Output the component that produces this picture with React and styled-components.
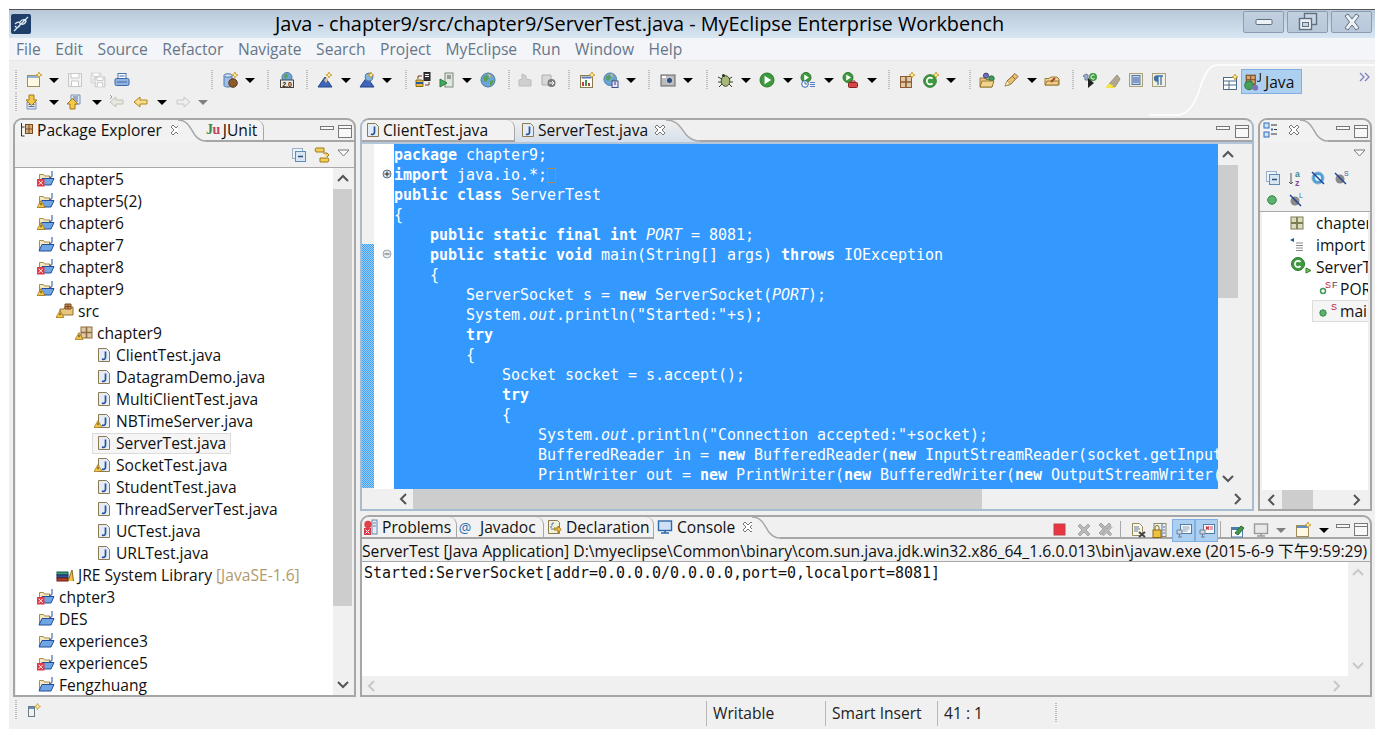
import React from 'react';
import styled, { createGlobalStyle } from 'styled-components';

const Global = createGlobalStyle`
  html, body { margin: 0; padding: 0; background: #fff; }
  body { font-family: "Open Sans", "Noto Sans", "Noto Sans CJK SC", sans-serif; font-size: 15.6px; color: #111; overflow: hidden; }
`;
const BORDER = '#a6a6a6';
const Window = styled.div`
  position: relative; width: 1366px; height: 720px; margin: 9px 0 0 9px; background: #f0f0f0;
  display: flex; flex-direction: column; overflow: hidden;
`;
const TitleBar = styled.div`
  height: 29px; flex: none; display: flex; align-items: center; padding-left: 2px; box-sizing: border-box;
  border-top: 1px solid #555; background: linear-gradient(#b8c8d8, #d8e6f3);
`;
const Logo = styled.svg` width: 20px; height: 20px; flex: none; `;
const Title = styled.div`
  flex: 1; padding: 0 0 2px 244px; font-size: 19.9px; color: #000; white-space: nowrap;
`;
const WinButtons = styled.div` display: flex; gap: 3px; padding: 0 3px 5px 0; align-self: flex-end; `;
const WinBtn = styled.div`
  width: 41px; height: 22px; box-sizing: border-box; border: 1px solid #8b9db3; border-radius: 2px;
  background: linear-gradient(#c2d0df, #b8c8da); display: flex; align-items: center; justify-content: center;
`;
const MenuBar = styled.div`
  height: 23px; flex: none; box-sizing: border-box; background: #f3f5f8; border-bottom: 1px solid #e6e6e6;
  display: flex; align-items: center; padding-left: 7px; gap: 14.6px; color: #66768a; font-size: 15.6px;
`;
const Toolbar = styled.div`
  position: relative; height: 57px; flex: none; display: flex; box-sizing: border-box; padding-top: 8px; background: #efefef;
`;
const Rows = styled.div` flex: 1; display: flex; flex-direction: column; `;
const Row = styled.div` height: 22px; display: flex; align-items: center; `;
const CurveLayer = styled.svg` position: absolute; left: 1140px; top: 0; pointer-events: none; `;
const Slot = styled.div`
  flex: none; width: ${p => p.$w}px; margin-left: ${p => p.$ml}px; display: flex; align-items: center; justify-content: center;
  height: ${p => p.$on ? 23 : 22}px; box-sizing: border-box;
  ${p => p.$on ? 'background:#aed0f0;border:1px solid #7fb0e4;' : ''}
`;
const Grip = styled.div`
  width: 2px; height: 20px; background: repeating-linear-gradient(#bdbdbd 0 1px, transparent 1px 2px);
`;
const Sep = styled.div` width: 1px; height: 18px; background: #a8a8a8; `;
const Drop = styled.div`
  width: 0; height: 0; border-left: 5px solid transparent; border-right: 5px solid transparent;
  border-top: 5px solid ${p => p.$gray ? '#808080' : '#000'};
`;
const Perspective = styled.div`
  position: absolute; left: 1213px; top: 8px; display: flex; align-items: center; gap: 3px;
`;
const JavaBtn = styled.div`
  width: 61px; height: 25px; box-sizing: border-box; background: #aed0f0; border: 1px solid #7fb0e4;
  display: flex; align-items: center; gap: 3px; padding-left: 2px; font-size: 15.6px;
`;
const More = styled.svg` position: absolute; left: 1350px; top: 11px; `;
const Workspace = styled.div` flex: 1; min-height: 0; display: flex; gap: 4px; padding: 0 3px 0 4px; `;
const RightCol = styled.div` flex: 1; display: flex; flex-direction: column; gap: 4px; min-width: 0; `;
const TopRow = styled.div` display: flex; gap: 4px; height: 393px; flex: none; `;
const Panel = styled.div`
  box-sizing: border-box; width: ${p => p.$w ? p.$w + 'px' : 'auto'}; ${p => p.$w ? 'flex:none;' : 'flex:1;'}
  min-height: 0; display: flex; flex-direction: column; overflow: hidden;
  border: 2px solid ${p => p.$active ? '#a8bccf' : BORDER}; border-top-color: ${BORDER};
  border-radius: 9px 9px 0 0; background: #f0f0f0;
`;
const Strip = styled.div` height: 22px; flex: none; display: flex; position: relative; `;
const Tab = styled.div`
  flex: none; position: relative; z-index: ${p => p.$active ? 2 : 1}; height: 100%; box-sizing: border-box;
  width: ${p => p.$w}px; margin-left: ${p => p.$ml || 0}px; padding-left: ${p => p.$pl ?? 4}px;
  display: flex; align-items: center; gap: ${p => p.$gap ?? 4}px; white-space: nowrap; font-size: 15.6px; color: #111;
  background: ${p => p.$grad ? 'linear-gradient(#f0f0f0, #d6e0eb)' : '#f2f2f2'};
  ${p => p.$active ? 'padding-bottom: 2px;' : `border-bottom: 2px solid ${BORDER}; border-right: 1px solid ${BORDER}; border-radius: 0 8px 0 0;`}
`;
const TabClose = styled.svg` flex: none; margin-left: ${p => p.$ml ?? 4}px; `;
const Curve = styled.svg` flex: none; position: relative; z-index: 2; display: block; `;
const StripFill = styled.div`
  flex: 1; min-width: 0; height: 100%; box-sizing: border-box; border-bottom: 2px solid ${BORDER};
  display: flex; align-items: flex-start; justify-content: flex-end; padding: ${p => p.$top ?? 1}px ${p => p.$right ?? 3}px 0 0;
`;
const ToolRow = styled.div`
  height: 25px; flex: none; display: flex; justify-content: flex-end; align-items: center; box-sizing: border-box;
  padding-right: ${p => p.$right ?? 0}px;
`;
const TreeWrap = styled.div` flex: 1; min-height: 0; display: flex; padding-left: 1px; border-top: 1px solid #a8a8a8; `;
const Tree = styled.div` flex: 1; min-width: 0; background: #fff; overflow: hidden; `;
const TreeRow = styled.div`
  height: 22px; display: flex; align-items: center; padding-left: ${p => p.$d * 19 + 19}px; white-space: nowrap;
`;
const RowBox = styled.div`
  display: flex; align-items: center; gap: 4px; height: 21px; padding: 0 4px 0 1px; box-sizing: border-box; flex: none;
  border: 1px solid ${p => p.$sel ? '#dcdcdc' : 'transparent'}; background: ${p => p.$sel ? '#f5f5f5' : 'transparent'};
`;
const IconSlot = styled.div` width: 18px; height: 18px; flex: none; display: flex; align-items: center; justify-content: center; `;
const Deco = styled.span` color: #b09a6c; `;
const VBar = styled.div` width: ${p => p.$w || 19}px; flex: none; display: flex; flex-direction: column; background: #f0f0f0; `;
const ArrowBox = styled.div`
  height: ${p => p.$h || 21}px; flex: none; display: flex; align-items: center; justify-content: center;
`;
const HArrow = styled.div` width: ${p => p.$w || 20}px; height: 100%; flex: none; display: flex; align-items: center; justify-content: center; `;
const Track = styled.div` flex: 1; min-height: 0; `;
const VThumb = styled.div` background: #cdcdcd; height: ${p => p.$h}px; margin-top: ${p => p.$t || 0}px; `;
const HBar = styled.div` height: ${p => p.$h || 20}px; flex: none; display: flex; background: #f0f0f0; padding-left: ${p => p.$l || 0}px; padding-right: ${p => p.$r || 0}px; `;
const HTrack = styled.div` flex: 1; min-width: 0; `;
const HThumb = styled.div` background: #cdcdcd; height: 100%; width: ${p => p.$w}px; margin-left: ${p => p.$l || 0}px; `;
const EditorBody = styled.div` flex: 1; min-height: 0; display: flex; border-top: 2px solid #b4c7da; `;
const Ruler = styled.div` width: 12px; flex: none; background: #f0f0f0; display: flex; flex-direction: column; `;
const RulerMark = styled.div`
  margin-top: 100px; height: 244px; background-color: #5fb0f5;
  background-image: repeating-conic-gradient(#9ccff8 0 25%, #3f9ff5 0 50%); background-size: 2px 2px;
`;
const Fold = styled.div` width: 20px; flex: none; background: #fff; position: relative; `;
const FoldMark = styled.svg` position: absolute; left: 8px; top: ${p => p.$y}px; `;
const Code = styled.pre`
  width: 824px; flex: none; margin: 0; overflow: hidden; background: #3399ff; color: #fff; padding-top: 1px; box-sizing: border-box;
  font: 15px/20px "DejaVu Sans Mono", monospace; letter-spacing: -.03px; white-space: pre;
  b { font-weight: 700; } i { font-style: italic; }
`;
const CaretBox = styled.span` display: inline-block; width: 9px; height: 15px; border: 1px solid #b08a50; vertical-align: -3px; box-sizing: border-box; `;
const Pad = styled.div` width: ${p => p.$w || 14}px; flex: none; background: #f0f0f0; `;
const OutlineTools = styled.div` height: 70px; flex: none; box-sizing: border-box; border-bottom: 1px solid #a8a8a8; `;
const OutlineTree = styled.div` flex: 1; min-height: 0; margin: 0 2px; background: #fff; overflow: hidden; `;
const ORow = styled.div`
  height: 22px; display: flex; align-items: center; white-space: nowrap; padding-left: ${p => p.$d ? 50 : 26}px;
`;
const OBox = styled.div`
  display: flex; align-items: center; gap: 1px; height: 22px; box-sizing: border-box; flex: none; width: 100%;
  border: 1px solid ${p => p.$sel ? '#dcdcdc' : 'transparent'}; border-right: 0; background: ${p => p.$sel ? '#f5f5f5' : 'transparent'};
`;
const OSlot = styled.div`
  width: 26px; height: 18px; flex: none; display: flex; align-items: center; justify-content: ${p => p.$start ? 'flex-start' : 'flex-end'};
`;
const ConsoleHead = styled.div`
  height: 23px; flex: none; box-sizing: border-box; border-bottom: 1px solid #a8a8a8; font-size: 15.7px;
  display: flex; align-items: center; white-space: nowrap; overflow: hidden; color: #111;
`;
const ConsoleMain = styled.div` flex: 1; min-height: 0; display: flex; `;
const ConsoleText = styled.pre`
  flex: 1; margin: 0; background: #fff; padding: 1px 0 0 2px; font: 15px/20px "DejaVu Sans Mono", monospace; letter-spacing: -.03px; color: #111;
`;
const StatusBar = styled.div` height: 32px; flex: none; display: flex; align-items: center; background: #f0f0f0; `;
const StatusLeft = styled.div` width: 697px; flex: none; display: flex; align-items: center; height: 100%; padding-bottom: 6px; box-sizing: border-box; `;
const StatusCell = styled.div`
  width: ${p => p.$w}px; flex: none; box-sizing: border-box; height: 25px; border-left: 1px solid #b8b8b8; padding-left: 6px;
  display: flex; align-items: center; font-size: 15.6px; color: #222; padding-bottom: 1px;
`;
const Ju = styled.span` font: 700 14px "Liberation Serif", serif; letter-spacing: -.5px; color: #3b8a4a; span { color: #c0455a; } `;
const At = styled.span` color: #2c6fb0; font-size: 14px; width: 14px; text-align: center; `;

const Sv = ({ s = 16, v = 16, children }) => <svg width={s} height={s} viewBox={`0 0 ${v} ${v}`} style={{ display: 'block', flex: 'none' }}>{children}</svg>;

const star = (x = 10, y = 0) => <path transform={`translate(${x} ${y})`} d="M3 0l.9 2.1L6 3l-2.1.9L3 6l-.9-2.1L0 3l2.1-.9z" fill="#fff3a8" stroke="#c08a10" strokeWidth=".7" />;
const warn = <><path d="M4 8.5l4 7H0z" fill="#f5c842" stroke="#9a6a10" strokeWidth=".7" /><path d="M4 10.8v2.5" stroke="#333" /></>;
const err = <><rect x="0" y="9" width="7.5" height="7.5" fill="#e0394a" /><path d="M1.7 10.8l4 4m0-4l-4 4" stroke="#fff" /></>;
const jfile = <><path d="M2.5 1.5h8l3 3v10h-11z" fill="#e4ecf7" stroke="#8d7b4f" /><path d="M9.5 4.5v5.8c0 2.2-2 2.4-3.5 1.6" stroke="#28529c" strokeWidth="1.7" fill="none" /></>;
const folderP = <><path d="M2.5 4.5h4l1 1.5h5.5v8h-10.5z" fill="#f7e9bd" stroke="#a58c4c" /><path d="M2 15l3-6.5h12l-3 6.5z" fill="#70a5e3" stroke="#1f4d9f" /><path d="M15 1v5c0 1.6-1.6 1.6-3 1" stroke="#1f4d9f" fill="none" /></>;
const pkg = <><rect x="3" y="3" width="11" height="11" fill="#dcc9a8" stroke="#8f6a3a" /><path d="M3 8.5h11M8.5 3v11" stroke="#8f6a3a" strokeWidth="1.6" /></>;
const floppy = (c = '#c8c8c8') => <><path d="M1.5 1.5h13v13h-13z" fill="#f2f2f2" stroke={c} /><path d="M4 2v4h8V2M4.5 14v-5h7v5" fill="#fff" stroke={c} /></>;
const arrowL = (c, f) => <path d="M1 8l6-5v3h7v4H7v3z" fill={f} stroke={c} />;
const arrowR = (c, f) => <path d="M15 8l-6-5v3H2v4h7v3z" fill={f} stroke={c} />;
const playGreen = (cx = 8, cy = 8, r = 7) => <><circle cx={cx} cy={cy} r={r} fill="#3f9a3f" stroke="#2a7a2a" /><path d={`M${cx - r * .35} ${cy - r * .6}L${cx + r * .6} ${cy}L${cx - r * .35} ${cy + r * .6}z`} fill="#fff" /></>;
const monitor = (c = '#4a7db0', f = '#fff') => <><rect x="1.5" y="2" width="13" height="9.5" fill={f} stroke={c} strokeWidth="1.4" /><path d="M4 14h8M8 11.5V14" stroke={c} strokeWidth="1.6" /></>;
const globe = <><circle cx="8" cy="8" r="7" fill="#6aa5d8" stroke="#4a78a0" /><path d="M3 5l4-2 2 3-3 4-2-1zM10 9l3-1 0 3-3 3z" fill="#5aa050" /><path d="M8 2l3 1-1 3z" fill="#f0c040" /></>;
const triStar = (g) => <><path d="M1 15L8 5l7 10z" fill="#3f66b8" stroke="#23458c" />{g ? <circle cx="10" cy="5" r="4" fill="#7db6e0" stroke="#5a7ea0" /> : <path d="M7 8l3-3 1 3-2 3z" fill="#d8c090" />}{star(9, 0)}</>;
const xshape = <path d="M2 4l2-2 4 4 4-4 2 2-4 4 4 4-2 2-4-4-4 4-2-2 4-4z" fill="#b9b9b9" stroke="#a5a5a5" />;

const ICONS = {
  new: <><rect x="1.5" y="3.5" width="12" height="11" fill="#fff9e4" stroke="#a08d58" /><rect x="2" y="4" width="11" height="2" fill="#8fb4e0" />{star(10, 0)}</>,
  fast: <><rect x="3.5" y="4.5" width="6" height="10" fill="#eef2f6" stroke="#6a7a80" /><rect x="4" y="5" width="5" height="2" fill="#5f8fc8" />{star(9.5, 1.5)}</>,
  save: floppy(), saveall: <><g transform="scale(.75)">{floppy()}</g><g transform="translate(4 4) scale(.75)">{floppy('#bbb')}</g></>,
  print: <><rect x="4" y="1.5" width="8" height="6" fill="#fff" stroke="#4a70a8" /><rect x="1" y="6.5" width="14" height="7" rx="1.5" fill="#8fb4e0" stroke="#3f66a8" /><path d="M5.5 4h5M3 10h10" stroke="#3f66a8" /></>,
  db: <><path d="M2 3.5v10c0 2 8 2 8 0v-10z" fill="#9cc0e8" stroke="#4f78b0" /><ellipse cx="6" cy="3.5" rx="4" ry="1.8" fill="#cfe0f4" stroke="#4f78b0" /><circle cx="11" cy="11" r="4.3" fill="#8a5a2c" stroke="#5c3a1a" />{star(10, 0)}</>,
  ws: <><circle cx="8" cy="5.5" r="5" fill="#6aa5d8" stroke="#4a78a0" /><path d="M5 3l3-1 1 3-3 2z" fill="#5aa050" /><rect x="1.5" y="8" width="13" height="7.5" fill="#eee" stroke="#444" /><text x="8" y="14.5" textAnchor="middle" fontSize="7" fontWeight="700" fontFamily="Liberation Sans" fill="#222">2.0</text></>,
  dep1: triStar(false), dep2: triStar(true),
  srv1: <><rect x="9" y=".5" width="6" height="8" fill="#333" stroke="#222" /><path d="M10 2.5h4M10 4.5h4" stroke="#fff" /><path d="M1 8h6l1 1.5v5H1z" fill="#e8b83a" stroke="#8a6a10" /><path d="M1 11h7" stroke="#2a5aa0" strokeWidth="2" /><path d="M7 4H3v3M10 13h4v-3" stroke="#7a3a10" fill="none" /></>,
  srv2: <><rect x="6" y="1" width="8" height="14" fill="#dfe8e0" stroke="#7a8a7a" /><path d="M8 4h4M8 6h4" stroke="#555" /><path d="M1 7l7 4-7 4z" fill="#3faa5a" stroke="#2a7a3a" /></>,
  globe,
  gray1: <><path d="M2 14V8l3-1V2l4 2v3l5 1v6z" fill="#cfcfcf" stroke="#bdbdbd" /></>,
  gray2: <><path d="M2 3h9v10H2z" fill="#d8d8d8" stroke="#b0b0b0" /><circle cx="11.5" cy="11" r="4" fill="#7a7a7a" /><path d="M9 11h5m-2-2l2 2-2 2" stroke="#fff" fill="none" /></>,
  report: <><rect x="1.5" y="3.5" width="12" height="12" fill="#fff" stroke="#8a7a50" /><rect x="2.5" y="4.5" width="10" height="2" fill="#5a7ab0" /><path d="M4 14V10M10 14v-3" strokeWidth="2" stroke="#c04040" /><path d="M7 14V8" strokeWidth="2" stroke="#3f9a4a" />{star(10, 0)}</>,
  globe2: <><g transform="scale(.9)">{globe}</g><rect x="9" y="9" width="6" height="6.5" fill="#e8e8f4" stroke="#444a8a" /><path d="M12 10v3" stroke="#3030a0" /></>,
  camera: <><rect x="1" y="3" width="14" height="11" fill="#bbb" stroke="#666" /><circle cx="9.5" cy="8.5" r="3.2" fill="#2f4f80" stroke="#ddd" /><rect x="2" y="4" width="4" height="2" fill="#fff" /></>,
  bug: <><ellipse cx="8.5" cy="9" rx="4.3" ry="5.3" fill="#a8b878" stroke="#40502a" /><circle cx="6.5" cy="3.5" r="1.6" fill="#2a3a20" /><path d="M1 5l4 2M1 10h3M2 15l3-3M15 5l-3 2M16 10h-3M15 15l-3-3" stroke="#304020" /></>,
  run: playGreen(),
  runh: <>{playGreen(6, 5.5, 5)}<circle cx="5" cy="12" r="3.3" fill="#fff" stroke="#3060b0" /><path d="M5 10v2h2" stroke="#3060b0" fill="none" /><path d="M10 10.5h5M10 12.5h5M10 14.5h5" stroke="#5a80c0" /></>,
  runt: <>{playGreen(6, 5.5, 5)}<rect x="6.5" y="10.5" width="9" height="5" rx="1" fill="#d04848" stroke="#902020" /><path d="M9 10.5V9h4v1.5" stroke="#902020" fill="none" /></>,
  npkg: <><rect x="1.5" y="4.5" width="11" height="11" fill="#e0c8a4" stroke="#8a5c30" /><path d="M1.5 10h11M7 4.5v11" stroke="#8a5c30" strokeWidth="1.6" />{star(10, 0)}</>,
  ncls: <><circle cx="7" cy="9" r="6.3" fill="#3f9a3f" stroke="#2a7a2a" /><path d="M9.5 6.7a3.3 3.3 0 1 0 0 4.6" stroke="#fff" strokeWidth="1.7" fill="none" />{star(10, 0)}</>,
  otype: <><path d="M1 6h5l1 1.5h6V15H1z" fill="#e8c680" stroke="#9a7a30" /><circle cx="7" cy="3.7" r="2.6" fill="#7070b0" stroke="#44447a" /><circle cx="12.5" cy="6.5" r="2.7" fill="#3f9a5a" stroke="#2a7a3a" /><path d="M1 15l2-6h12l-2 6z" fill="#f2d48e" stroke="#9a7a30" /></>,
  brush: <><path d="M2 14l2-5 8-7.5 3 3-7.5 8z" fill="#e8c070" stroke="#8a6a30" /><path d="M2 14l2-5 3 3z" fill="#fff8d0" stroke="#b0a070" /><path d="M9 4l3 3" stroke="#8a6a30" /></>,
  folderb: <><path d="M1 13V6.5h4L7 5h6l2 2v6z" fill="#f2d69a" stroke="#9a7a30" /><path d="M1 13l2-4h12l-1 4z" fill="#f0cc88" stroke="#9a7a30" /><path d="M7 10l4-4" stroke="#a04a2a" strokeWidth="2" /></>,
  gotog: <><path d="M1 4l3-2 2 1v5H3V5z" fill="#a0b4d0" stroke="#6a7a9a" /><circle cx="11" cy="5" r="4" fill="#3f9a3f" /><path d="M12.6 3.8a2 2 0 1 0 0 2.4" stroke="#fff" fill="none" /><path d="M6 6v10l6-5z" fill="#222" /></>,
  mark: <><path d="M2 15h8l5-8-3-4-7 8z" fill="#b0a890" stroke="#9a9078" /><path d="M1 15.5l3-4 4 2-1 2z" fill="#f8e840" /><path d="M1 15.5h9" stroke="#f8e040" strokeWidth="1.5" /></>,
  block: <><rect x="1.5" y="1.5" width="13" height="13" fill="#f0f0e0" stroke="#a8a078" /><rect x="4" y="3.5" width="8" height="9" fill="#c8d8f0" stroke="#5070a8" /><path d="M5 6h6M5 8h6M5 10h6" stroke="#3a5a9a" /></>,
  pil: <><rect x="1.5" y="1.5" width="13" height="13" fill="#f0f0e0" stroke="#a8a078" /><path d="M7 4H6a2.3 2.3 0 0 0 0 5h1V4zm0 0v9M10 4v9M6 4h6" stroke="#3f70a8" strokeWidth="1.3" fill="#3f70a8" /></>,
  down: <><path d="M2 8h9v7H2z" fill="#dfe8f4" stroke="#7a90b0" /><path d="M3.5 10.5h6M3.5 12.5h6" stroke="#5070a8" /><path d="M4 1h5v5h3l-5.5 5.5L1 6h3z" fill="#f4c848" stroke="#a07a18" /></>,
  up: <><path d="M5 1h9v9H5z" fill="#dfe8f4" stroke="#7a90b0" /><path d="M7 3h5M7 5h5M7 7h5" stroke="#5070a8" /><path d="M4 15h5v-5h3L6.5 4.5 1 10h3z" fill="#f4c848" stroke="#a07a18" /></>,
  backg: <>{arrowL('#c2c2b4', '#e8e8e0')}<path d="M1 1l2 2-2 2" stroke="#999" fill="none" /></>,
  back: arrowL('#b0861c', '#f7dc8c'),
  fwdg: arrowR('#c8c8c8', '#eeeeee'),
  stop: <rect x="2" y="2" width="11" height="11" fill="#e8353f" stroke="#c04048" />,
  xg: xshape,
  xxg: <><g transform="translate(-1 -1)">{xshape}</g><g transform="translate(2 2) scale(.85)">{xshape}</g></>,
  clip: <><path d="M2.5 1.5h7l3 3v9h-10z" fill="#f7f7ee" stroke="#9a8a5a" /><path d="M4 5h5M4 7h6M4 9h4" stroke="#6a7a9a" /><path d="M9 10l6 5m0-5l-6 5" stroke="#444" strokeWidth="2" /></>,
  lock: <><rect x="2" y="1.5" width="12" height="13" fill="#f0f0f0" stroke="#8a8a70" /><path d="M10 2v12M11 5h2M11 8h2M11 11h2" stroke="#5070a8" /><rect x="1" y="8" width="8" height="7.5" fill="#f0c040" stroke="#8a6a10" /><path d="M3 8V5.5a2 2 0 0 1 4 0V8" stroke="#8a6a10" fill="none" /></>,
  con1: <><rect x="4.5" y="1.5" width="11" height="9" fill="#f7fafd" stroke="#4f7ba8" /><path d="M6.5 4h7M6.5 6h7M6.5 8h5" stroke="#88a0b8" /><path d="M1 7h5v4H1zM2 14h4M3.5 11v3" stroke="#6a8098" fill="#cdd8e4" /></>,
  con2: <><rect x="4.5" y="1.5" width="11" height="9" fill="#f7fafd" stroke="#4f7ba8" /><path d="M7 3.5l3 3m0-3l-3 3" stroke="#d03040" strokeWidth="1.5" /><path d="M11 4h3M11 6h3" stroke="#c05060" /><path d="M1 7h5v4H1zM2 14h4M3.5 11v3" stroke="#6a8098" fill="#cdd8e4" /></>,
  pin: <><rect x="1.5" y="5.5" width="11" height="9.5" fill="#fff" stroke="#4f7ba8" /><rect x="2" y="6" width="10" height="2" fill="#4f7ba8" /><path d="M5 11l6-7 3 2-6 7z" fill="#3f9a4a" stroke="#2a6a30" /></>,
  mon: monitor('#9a9a9a', '#e8e8e8'),
  ncon: <><rect x="1.5" y="3.5" width="12" height="11" fill="#fff9e4" stroke="#a08d58" /><rect x="2" y="4" width="11" height="2" fill="#5f8fc8" />{star(10, 0)}</>,
  collapse: <><rect x="1.5" y="1.5" width="10" height="10" fill="#eef3f9" stroke="#9ab0c8" /><rect x="4.5" y="4.5" width="10" height="10" fill="#d8e6f4" stroke="#5f8ab4" /><path d="M7 9.5h5" stroke="#27507e" strokeWidth="1.6" /></>,
  link: <><path d="M2 1l-1 2 1 2h8V1zM14 11l1 2-1 2H6v-4z" fill="#f4cd5c" stroke="#a07a18" /><path d="M9 6h4l2 2-2 2" stroke="#a07a18" fill="#f4cd5c" /></>,
  vmenu: <path d="M2 3h11l-5.5 6z" fill="#fff" stroke="#777" />,
  min: <rect x="1.5" y="2.5" width="13" height="3" fill="#f8f8f8" stroke="#777" />,
  max: <><rect x="1.5" y="1.5" width="13" height="12" fill="#f8f8f8" stroke="#777" /><path d="M2 4.5h12" stroke="#777" /></>,
  outline: <><rect x="1" y="1" width="5" height="5" fill="#cfe0f4" stroke="#2f6fb8" /><rect x="1" y="10" width="5" height="5" fill="#cfe0f4" stroke="#2f6fb8" /><path d="M8 3h6M8 12h6" stroke="#333" /><rect x="8" y="6.5" width="2" height="2" fill="#2f6fb8" /><path d="M11 7.5h3" stroke="#333" /></>,
  az: <><path d="M3 3v11m-2-2l2 2 2-2" stroke="#555" fill="none" /><text x="7" y="7" fontSize="8.5" fontWeight="700" fontFamily="Liberation Sans" fill="#3a8a8a">a</text><text x="7" y="15.5" fontSize="9" fontWeight="700" fontFamily="Liberation Sans" fill="#8a4aa0">z</text></>,
  hidef: <><circle cx="8" cy="8" r="6" fill="#4aa0d8" stroke="#8ab0c8" /><circle cx="8" cy="8" r="3" fill="#e8f2fa" /><path d="M2 2l12 12" stroke="#1f3f90" strokeWidth="1.4" /></>,
  hides: <><circle cx="7" cy="9" r="4.5" fill="#8a8a8a" /><path d="M2 3l11 11" stroke="#1f3f90" strokeWidth="1.4" /><text x="11" y="6" fontSize="7" fontFamily="Liberation Sans" fill="#3a6a9a">S</text></>,
  hidel: <><circle cx="7" cy="9" r="4.5" fill="#8a8a8a" /><path d="M2 3l11 11" stroke="#1f3f90" strokeWidth="1.4" /><text x="11" y="6" fontSize="7" fontFamily="Liberation Sans" fill="#3a6a9a">L</text></>,
  dot: <circle cx="8" cy="8" r="4.3" fill="#5fb06a" stroke="#2f8a4a" />,
  pkgTab: <><path d="M2.5 1v13h3M2.500 5h3" stroke="#333" fill="none" /><rect x="6.500" y="2.500" width="7" height="9" fill="#d8b080" stroke="#7a4a20" /><path d="M6.500 7h7M10 2.500v9" stroke="#7a4a20" /></>,
  probs: <><rect x="9" y="1" width="5" height="14" fill="#e4ecf4" stroke="#6a88a8" /><path d="M10 4h3M10 7h3" stroke="#6a88a8" /><circle cx="5" cy="5.5" r="3.7" fill="#e04048" /><rect x="1" y="9" width="7" height="7" fill="#d83848" /><path d="M2.5 10.5l4 4m0-4l-4 4" stroke="#fff" /></>,
  decl: <><path d="M2.5 1.5h9l2 2v11h-11z" fill="#f2f2dc" stroke="#8d7b4f" /><path d="M8 4a1.5 1.5 0 0 0-2 1v1.5L4.5 8 6 9.5V11" stroke="#3a70b0" fill="none" /><path d="M8 9h4V7l3 3.5-3 3.500V11H8z" fill="#f4c848" stroke="#a07a18" /></>,
  console: monitor('#2f6aa8', '#cfe0f4'),
  impt: <><path d="M1 3l4-2v4z" fill="#1f4f9f" /><path d="M7 6h7M7 8.500h7M7 11h7M7 13.500h7" stroke="#8a8a8a" /></>,
  pkgO: <><rect x="2" y="2" width="12" height="12" fill="#dcdcc0" stroke="#7c7c50" /><path d="M2 8h12M8 2v12" stroke="#7c7c50" strokeWidth="1.8" /></>,
  persp: <><rect x="1.5" y="3.500" width="13" height="12" fill="#fff" stroke="#4a6a8a" /><path d="M1.5 7h13M1.5 11h13M7 7v8" stroke="#4a6a8a" />{star(10, 0)}</>,
  javaP: <><rect x="2" y="2" width="8" height="8" fill="#d8a870" stroke="#7a4a20" /><path d="M2 6h8M6 2v8" stroke="#7a4a20" /><circle cx="4.500" cy="11" r="3.800" fill="#47a15a" stroke="#2f7a40" /><circle cx="10" cy="13" r="2.600" fill="#8070b8" /><path d="M14.500 0v6c0 1.800-1.800 1.800-3 1" stroke="#222" fill="none" /></>,
};

const Ic = ({ n, s = 16 }) => <Sv s={s}>{ICONS[n]}</Sv>;

const rowOf = (items, origin) => {
  let edge = origin;
  return items.map(([n, c, opt], i) => {
    const w = n === 'grip' || n === 'sep' ? 2 : n === 'v' || n === 'vg' ? 10 : opt === 'on' ? 23 : 18;
    const ml = c - w / 2 - edge;
    edge = c + w / 2;
    return (
      <Slot key={i} $w={w} $ml={ml} $on={opt === 'on'}>
        {n === 'grip' ? <Grip /> : n === 'sep' ? <Sep /> : n === 'v' ? <Drop /> : n === 'vg' ? <Drop $gray /> : <Ic n={n} />}
      </Slot>
    );
  });
};

const ROW1 = [['grip', 16], ['new', 34], ['v', 54], ['save', 75], ['saveall', 98], ['print', 122], ['grip', 212], ['db', 230], ['v', 250], ['grip', 268], ['ws', 287], ['grip', 307], ['dep1', 325], ['v', 346], ['dep2', 367], ['v', 387], ['grip', 406], ['srv1', 423], ['srv2', 447], ['v', 467], ['globe', 488], ['grip', 509], ['gray1', 525], ['gray2', 548], ['grip', 569], ['report', 587], ['globe2', 611], ['v', 631], ['grip', 649], ['camera', 668], ['v', 688], ['grip', 707], ['bug', 725], ['v', 746], ['run', 767], ['v', 788], ['runh', 808], ['v', 829], ['runt', 850], ['v', 872], ['grip', 889], ['npkg', 907], ['ncls', 931], ['v', 951], ['grip', 970], ['otype', 987], ['brush', 1011], ['v', 1032], ['folderb', 1052], ['grip', 1073], ['gotog', 1090], ['mark', 1113], ['block', 1136], ['pil', 1159]];
const ROW2 = [['grip', 16], ['down', 33], ['v', 54], ['up', 74], ['v', 97], ['backg', 117], ['back', 141], ['v', 162], ['fwdg', 183], ['vg', 203]];
const CONSOLE_TOOLS = [['stop', 1058], ['xg', 1082], ['xxg', 1104], ['sep', 1118], ['clip', 1136], ['lock', 1158], ['con1', 1181.5, 'on'], ['con2', 1204.5, 'on'], ['sep', 1218], ['pin', 1236], ['mon', 1259], ['vg', 1279], ['ncon', 1301], ['v', 1322], ['min', 1341], ['max', 1359]];

const Chev = ({ d, c = '#555' }) => {
  const p = { up: 'M1 7l5-5 5 5', down: 'M1 2l5 5 5-5', left: 'M8 1L3 6l5 5', right: 'M4 1l5 5-5 5' }[d];
  const hz = d === 'left' || d === 'right';
  return <svg width="12" height={hz ? 12 : 9} viewBox={hz ? '0 0 12 12' : '0 0 12 9'} style={{ display: 'block' }}><path d={p} fill="none" stroke={c} strokeWidth="2" /></svg>;
};

const Close = ({ ml }) => (
  <TabClose $ml={ml} width="12" height="12" viewBox="0 0 12 12">
    <path d="M1 3l2-2 3 3 3-3 2 2-3 3 3 3-2 2-3-3-3 3-2-2 3-3z" fill="#fff" stroke="#777" />
  </TabClose>
);

const TabCurve = ({ w = 34, h = 22, fill = '#f2f2f2', id }) => (
  <Curve width={w} height={h} viewBox={`0 0 ${w} ${h}`}>
    {id && <defs><linearGradient id={id} x1="0" y1="0" x2="0" y2="1"><stop offset="0" stopColor="#f0f0f0" /><stop offset="1" stopColor="#d6e0eb" /></linearGradient></defs>}
    <path d={`M0 0C${w * .35} 0 ${w * .45} ${h * .4} ${w * .6} ${h * .68}C${w * .72} ${h * .88} ${w * .85} ${h - 1} ${w} ${h - 1}V${h}H0z`} fill={id ? `url(#${id})` : fill} />
    <path d={`M0 0C${w * .35} 0 ${w * .45} ${h * .4} ${w * .6} ${h * .68}C${w * .72} ${h * .88} ${w * .85} ${h - 1} ${w} ${h - 1}`} fill="none" stroke={BORDER} strokeWidth="1.5" />
  </Curve>
);

const TREE = [
  [0, 'chapter5', 'pe'], [0, 'chapter5(2)', 'pw'], [0, 'chapter6', 'pw'], [0, 'chapter7', 'p'], [0, 'chapter8', 'pe'], [0, 'chapter9', 'pw'],
  [1, 'src', 'src'], [2, 'chapter9', 'pk'],
  [3, 'ClientTest.java', 'j'], [3, 'DatagramDemo.java', 'j'], [3, 'MultiClientTest.java', 'j'], [3, 'NBTimeServer.java', 'jw'], [3, 'ServerTest.java', 'j', true], [3, 'SocketTest.java', 'jw'], [3, 'StudentTest.java', 'j'], [3, 'ThreadServerTest.java', 'j'], [3, 'UCTest.java', 'j'], [3, 'URLTest.java', 'j'],
  [1, 'JRE System Library', 'jre', false, ' [JavaSE-1.6]'],
  [0, 'chpter3', 'pe'], [0, 'DES', 'p'], [0, 'experience3', 'p'], [0, 'experience5', 'pe'], [0, 'Fengzhuang', 'p'],
];

const TreeIcon = ({ k }) => {
  const map = {
    p: folderP, pe: <>{folderP}{err}</>, pw: <>{folderP}{warn}</>,
    src: <><path d="M4 7h4l1-2h8v8H4z" fill="#e8c680" stroke="#94702c" /><path d="M9 2h6v5H9zM12 2v5M9 4.500h6" stroke="#7a4a20" fill="#c8925a" />{warn}</>,
    pk: <><g transform="translate(3 0)">{pkg}</g>{warn}</>,
    j: <g transform="translate(2 1)">{jfile}</g>, jw: <><g transform="translate(2 1)">{jfile}</g>{warn}</>,
    jre: <><rect x="1" y="6" width="11" height="3" fill="#3a9a7a" stroke="#1f5a4a" /><rect x="1" y="9" width="11" height="3" fill="#3050a0" stroke="#1f2f6a" /><rect x="1" y="12" width="11" height="3" fill="#b04030" stroke="#702010" /><path d="M12 15l4-11 1.500 11" fill="#f0c840" stroke="#8a6a10" /></>,
  };
  return <Sv s={18} v={18}>{map[k]}</Sv>;
};

const code = (
  <>
<b>package</b> chapter9;{'\n'}
<b>import</b> java.io.*;<CaretBox />{'\n'}
<b>public class</b> ServerTest{'\n'}
{'{'}{'\n'}
{'    '}<b>public static final int</b> <i>PORT</i> = 8081;{'\n'}
{'    '}<b>public static void</b> main(String[] args) <b>throws</b> IOException{'\n'}
{'    {'}{'\n'}
{'        '}ServerSocket s = <b>new</b> ServerSocket(<i>PORT</i>);{'\n'}
{'        '}System.<i>out</i>.println("Started:"+s);{'\n'}
{'        '}<b>try</b>{'\n'}
{'        {'}{'\n'}
{'            '}Socket socket = s.accept();{'\n'}
{'            '}<b>try</b>{'\n'}
{'            {'}{'\n'}
{'                '}System.<i>out</i>.println("Connection accepted:"+socket);{'\n'}
{'                '}BufferedReader in = <b>new</b> BufferedReader(<b>new</b> InputStreamReader(socket.getInputStream()));{'\n'}
{'                '}PrintWriter out = <b>new</b> PrintWriter(<b>new</b> BufferedWriter(<b>new</b> OutputStreamWriter(socket.getOutputStream())),<b>true</b>);
  </>
);

const WinGlyph = ({ t }) => {
  if (t === 'min') return <svg width="20" height="8"><rect x="2" y="1.500" width="16" height="5" rx="1" fill="#eef2f6" stroke="#5f6f80" /></svg>;
  if (t === 'max') return <svg width="24" height="20"><rect x="8.500" y="1.500" width="12" height="11" fill="#c8d6e4" stroke="#5f6f80" strokeWidth="1.400" /><rect x="3.500" y="6.500" width="12" height="11" fill="#eef2f6" stroke="#5f6f80" strokeWidth="1.400" /><rect x="6.500" y="10.500" width="6" height="4" fill="#c8d6e4" stroke="#5f6f80" /></svg>;
  return <svg width="20" height="18"><path d="M3 3l3-2 4 5 4-5 3 2-4.500 6 4.500 6-3 2-4-5-4 5-3-2 4.500-6z" fill="#eef2f6" stroke="#5f6f80" /></svg>;
};

export default function App() {
  return (
    <>
      <Global />
      <Window>
        <TitleBar>
          <Logo viewBox="0 0 20 20">
            <rect width="20" height="20" rx="2" fill="#1f3f6a" />
            <path d="M3 17L17 3M4 10c3-3 6-2 5 1s-4 3-5 1M9 8c2-3 6-3 6-1s-3 4-5 3" stroke="#dfe8f2" strokeWidth="1.300" fill="none" />
          </Logo>
          <Title>Java - chapter9/src/chapter9/ServerTest.java - MyEclipse Enterprise Workbench</Title>
          <WinButtons>
            <WinBtn><WinGlyph t="min" /></WinBtn>
            <WinBtn><WinGlyph t="max" /></WinBtn>
            <WinBtn><WinGlyph t="close" /></WinBtn>
          </WinButtons>
        </TitleBar>
        <MenuBar>
          {['File', 'Edit', 'Source', 'Refactor', 'Navigate', 'Search', 'Project', 'MyEclipse', 'Run', 'Window', 'Help'].map(m => <span key={m}>{m}</span>)}
        </MenuBar>
        <Toolbar>
          <Rows>
            <Row>{rowOf(ROW1, 9)}</Row>
            <Row>{rowOf(ROW2, 9)}</Row>
          </Rows>
          <CurveLayer width="226" height="57" viewBox="0 0 226 57">
            <path d="M0 54H28C40 54 46 42 50 30C55 14 60 4 68 4H226" fill="none" stroke="#fff" strokeWidth="1.500" />
          </CurveLayer>
          <Perspective>
            <Ic n="persp" />
            <JavaBtn><Ic n="javaP" s={18} />Java</JavaBtn>
          </Perspective>
          <More width="12" height="10" viewBox="0 0 12 10"><path d="M1 1l4 4-4 4M6 1l4 4-4 4" fill="none" stroke="#7c80c0" strokeWidth="1.300" /></More>
        </Toolbar>
        <Workspace>
          <Panel $w={343}>
            <Strip>
              <Tab $active $w={163} $pl={4} $gap={2}><Ic n="pkgTab" />Package Explorer<Close ml={6} /></Tab>
              <TabCurve w={28} />
              <Tab $w={86} $ml={-28} $pl={28} $gap={3}><Ju>J<span>u</span></Ju>JUnit</Tab>
              <StripFill $right={0}>
                {rowOf([['min', 326], ['max', 344]], 283)}
              </StripFill>
            </Strip>
            <ToolRow $right={1}>
              {rowOf([['collapse', 299], ['link', 322], ['vmenu', 344]], 289)}
            </ToolRow>
            <TreeWrap>
              <Tree>
                {TREE.map(([d, t, k, sel, deco], i) => (
                  <TreeRow key={i} $d={d}>
                    <RowBox $sel={sel}>
                      <IconSlot><TreeIcon k={k} /></IconSlot>
                      <span>{t}{deco && <Deco>{deco}</Deco>}</span>
                    </RowBox>
                  </TreeRow>
                ))}
              </Tree>
              <VBar $w={19}>
                <ArrowBox><Chev d="up" /></ArrowBox>
                <Track><VThumb $h={417} /></Track>
                <ArrowBox><Chev d="down" /></ArrowBox>
              </VBar>
              <Pad $w={2} />
            </TreeWrap>
          </Panel>
          <RightCol>
            <TopRow>
              <Panel $active $w={894}>
                <Strip>
                  <Tab $w={153} $pl={3} $gap={2}><Sv>{jfile}</Sv>ClientTest.java</Tab>
                  <Tab $active $grad $w={151} $pl={5} $gap={2}><Sv>{jfile}</Sv>ServerTest.java<Close ml={4} /></Tab>
                  <TabCurve w={34} id="tabg" />
                  <StripFill $right={1}>
                    {rowOf([['min', 1225], ['max', 1244]], 1180)}
                  </StripFill>
                </Strip>
                <EditorBody>
                  <Ruler><RulerMark /></Ruler>
                  <Fold>
                    <FoldMark $y={25} width="10" height="10"><circle cx="5" cy="5" r="4" fill="#dfe6ee" stroke="#5a7080" /><path d="M2.500 5h5M5 2.500v5" stroke="#222" /></FoldMark>
                    <FoldMark $y={105} width="10" height="10"><circle cx="5" cy="5" r="4" fill="#e6ebf0" stroke="#9aaab8" /><path d="M2.500 5h5" stroke="#666" /></FoldMark>
                  </Fold>
                  <Code>{code}</Code>
                  <VBar $w={20}>
                    <ArrowBox><Chev d="up" /></ArrowBox>
                    <Track><VThumb $h={133} /></Track>
                    <ArrowBox><Chev d="down" /></ArrowBox>
                  </VBar>
                  <Pad />
                </EditorBody>
                <HBar $h={20} $l={33} $r={5}>
                  <HArrow $w={18}><Chev d="left" /></HArrow>
                  <HTrack><HThumb $w={569} /></HTrack>
                  <HArrow $w={20}><Chev d="right" /></HArrow>
                </HBar>
              </Panel>
              <Panel $w={114}>
                <Strip>
                  <Tab $active $w={40} $pl={3} $gap={0}><Ic n="outline" /><Close ml={9} /></Tab>
                  <TabCurve w={28} />
                  <StripFill $right={0} $top={1}>
                    {rowOf([['min', 1341], ['max', 1359]], 1300)}
                  </StripFill>
                </Strip>
                <OutlineTools>
                  <ToolRow $right={1}>{rowOf([['vmenu', 1359]], 1300)}</ToolRow>
                  <Row>{rowOf([['collapse', 1273], ['az', 1296], ['hidef', 1318], ['hides', 1341]], 1260)}</Row>
                  <Row>{rowOf([['dot', 1272], ['hidel', 1296]], 1260)}</Row>
                </OutlineTools>
                <OutlineTree>
                  <ORow $d={0}><OBox><OSlot $start><Ic n="pkgO" /></OSlot>chapter9</OBox></ORow>
                  <ORow $d={0}><OBox><OSlot $start><Ic n="impt" /></OSlot>import declarations</OBox></ORow>
                  <ORow $d={0}><OBox><OSlot $start>
                    <Sv s={22} v={22}><circle cx="9" cy="8" r="6.500" fill="#3f9a3f" stroke="#2a7a2a" /><path d="M11.500 5.800a3.200 3.200 0 1 0 0 4.400" stroke="#fff" strokeWidth="1.700" fill="none" /><path d="M17 12l5 2.500-5 2.500z" fill="#7ac850" stroke="#2a7a2a" /></Sv>
                  </OSlot>ServerTest</OBox></ORow>
                  <ORow $d={1}><OBox><OSlot>
                    <Sv s={20} v={20}><circle cx="4" cy="12" r="2.500" fill="#fff" stroke="#3f9a5a" strokeWidth="1.500" /><text x="6" y="9" fontSize="9" fontFamily="Liberation Sans" fill="#c02030">S</text><text x="13" y="9" fontSize="9" fontFamily="Liberation Sans" fill="#445">F</text></Sv>
                  </OSlot>PORT : int</OBox></ORow>
                  <ORow $d={1}><OBox $sel><OSlot>
                    <Sv s={20} v={20}><circle cx="4" cy="12" r="3.200" fill="#5fb06a" stroke="#2f8a4a" /><text x="12" y="9" fontSize="9" fontFamily="Liberation Sans" fill="#c02030">S</text></Sv>
                  </OSlot>main(String[]) : void</OBox></ORow>
                </OutlineTree>
                <HBar $h={19} $l={2} $r={4}>
                  <HArrow $w={20}><Chev d="left" /></HArrow>
                  <HTrack><HThumb $w={31} /></HTrack>
                  <HArrow $w={20}><Chev d="right" /></HArrow>
                </HBar>
              </Panel>
            </TopRow>
            <Panel>
              <Strip>
                <Tab $w={95} $pl={1} $gap={3}><Ic n="probs" />Problems</Tab>
                <Tab $w={87} $pl={1} $gap={8}><At>@</At>Javadoc</Tab>
                <Tab $w={110} $pl={2} $gap={4}><Ic n="decl" />Declaration</Tab>
                <Tab $active $w={98} $pl={3} $gap={4}><Ic n="console" />Console<Close ml={3} /></Tab>
                <TabCurve w={28} />
                <StripFill $right={0} $top={2}>
                  {rowOf(CONSOLE_TOOLS, 1040)}
                </StripFill>
              </Strip>
              <ConsoleHead>ServerTest [Java Application] D:\myeclipse\Common\binary\com.sun.java.jdk.win32.x86_64_1.6.0.013\bin\javaw.exe (2015-6-9 下午9:59:29)</ConsoleHead>
              <ConsoleMain>
                <ConsoleText>Started:ServerSocket[addr=0.0.0.0/0.0.0.0,port=0,localport=8081]</ConsoleText>
                <VBar $w={20}>
                  <ArrowBox><Chev d="up" c="#c8c8c8" /></ArrowBox>
                  <Track />
                  <ArrowBox><Chev d="down" c="#c8c8c8" /></ArrowBox>
                </VBar>
                <Pad $w={2} />
              </ConsoleMain>
              <HBar $h={19} $l={0} $r={24}>
                <HArrow $w={20}><Chev d="left" c="#c8c8c8" /></HArrow>
                <HTrack />
                <HArrow $w={20}><Chev d="right" c="#c8c8c8" /></HArrow>
              </HBar>
            </Panel>
          </RightCol>
        </Workspace>
        <StatusBar>
          <StatusLeft>
            {rowOf([['grip', 16], ['fast', 33]], 9)}
          </StatusLeft>
          <StatusCell $w={119}>Writable</StatusCell>
          <StatusCell $w={112}>Smart Insert</StatusCell>
          <StatusCell $w={118}>41 : 1</StatusCell>
          <Grip />
        </StatusBar>
      </Window>
    </>
  );
}
